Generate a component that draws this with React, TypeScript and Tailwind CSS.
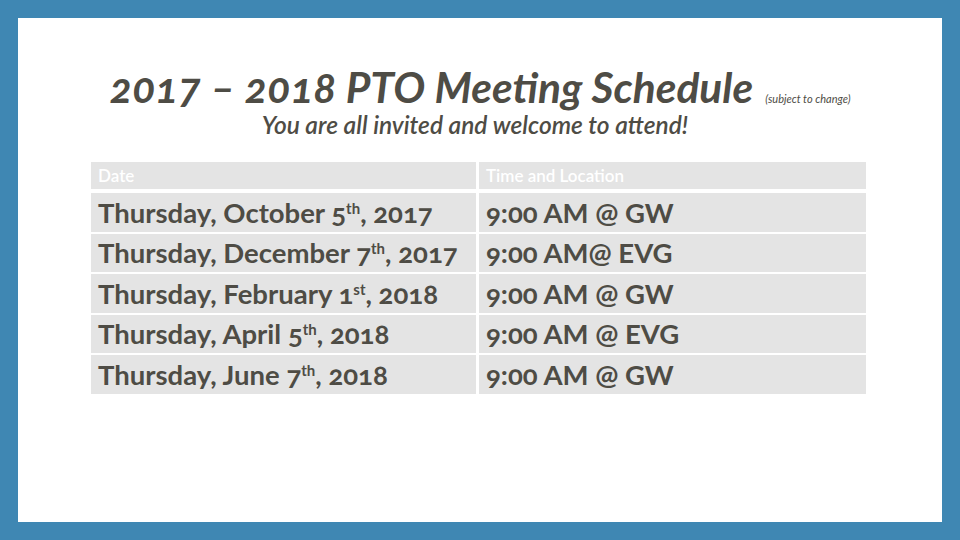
import React from "react";

const rows: { day: string; num: string; sup: string; year: string; time: string }[] = [
  { day: "Thursday, October ", num: "5", sup: "th", year: ", 2017", time: "9:00 AM @ GW" },
  { day: "Thursday, December ", num: "7", sup: "th", year: ", 2017", time: "9:00 AM@ EVG" },
  { day: "Thursday, February ", num: "1", sup: "st", year: ", 2018", time: "9:00 AM @ GW" },
  { day: "Thursday, April ", num: "5", sup: "th", year: ", 2018", time: "9:00 AM @ EVG" },
  { day: "Thursday, June ", num: "7", sup: "th", year: ", 2018", time: "9:00 AM @ GW" },
];

export default function App() {
  return (
    <div className="w-[960px] h-[540px] bg-[#3f87b3] p-[18px]" style={{ fontFamily: "Lato, 'Open Sans', sans-serif" }}>
      <div className="w-full h-full bg-white flex flex-col items-center text-[#4e4c45] oldstyle-nums">
        <div className="flex items-baseline gap-3 pt-[48px] leading-none">
          <h1 className="text-[42.5px] font-bold italic leading-none">2017 – 2018 PTO Meeting Schedule</h1>
          <span className="text-[11px] italic">(subject to change)</span>
        </div>
        <div className="mt-[4px] text-[24.5px] italic font-semibold leading-none pr-[10px]">
          You are all invited and welcome to attend!
        </div>
        <div className="mt-[25px] self-start ml-[73px] grid grid-cols-[385px_387px] gap-x-[3px] gap-y-[2px]">
          <div className="bg-[#e4e4e4] h-[27px] flex items-center px-[7px] text-[17px] text-white font-semibold">Date</div>
          <div className="bg-[#e4e4e4] h-[27px] flex items-center px-[7px] text-[17px] text-white font-semibold">Time and Location</div>
          <div className="col-span-2 h-0" />
          {rows.map((r) => (
            <React.Fragment key={r.day}>
              <div className="bg-[#e4e4e4] h-[38.5px] flex items-center px-[7px] text-[27.5px] font-bold whitespace-nowrap">
                <span>
                  {r.day}
                  {r.num}
                  <sup className="text-[15px] font-bold relative top-[-9px]">{r.sup}</sup>
                  {r.year}
                </span>
              </div>
              <div className="bg-[#e4e4e4] h-[38.5px] flex items-center px-[7px] text-[27.5px] font-bold whitespace-nowrap">
                {r.time}
              </div>
            </React.Fragment>
          ))}
        </div>
      </div>
    </div>
  );
}
